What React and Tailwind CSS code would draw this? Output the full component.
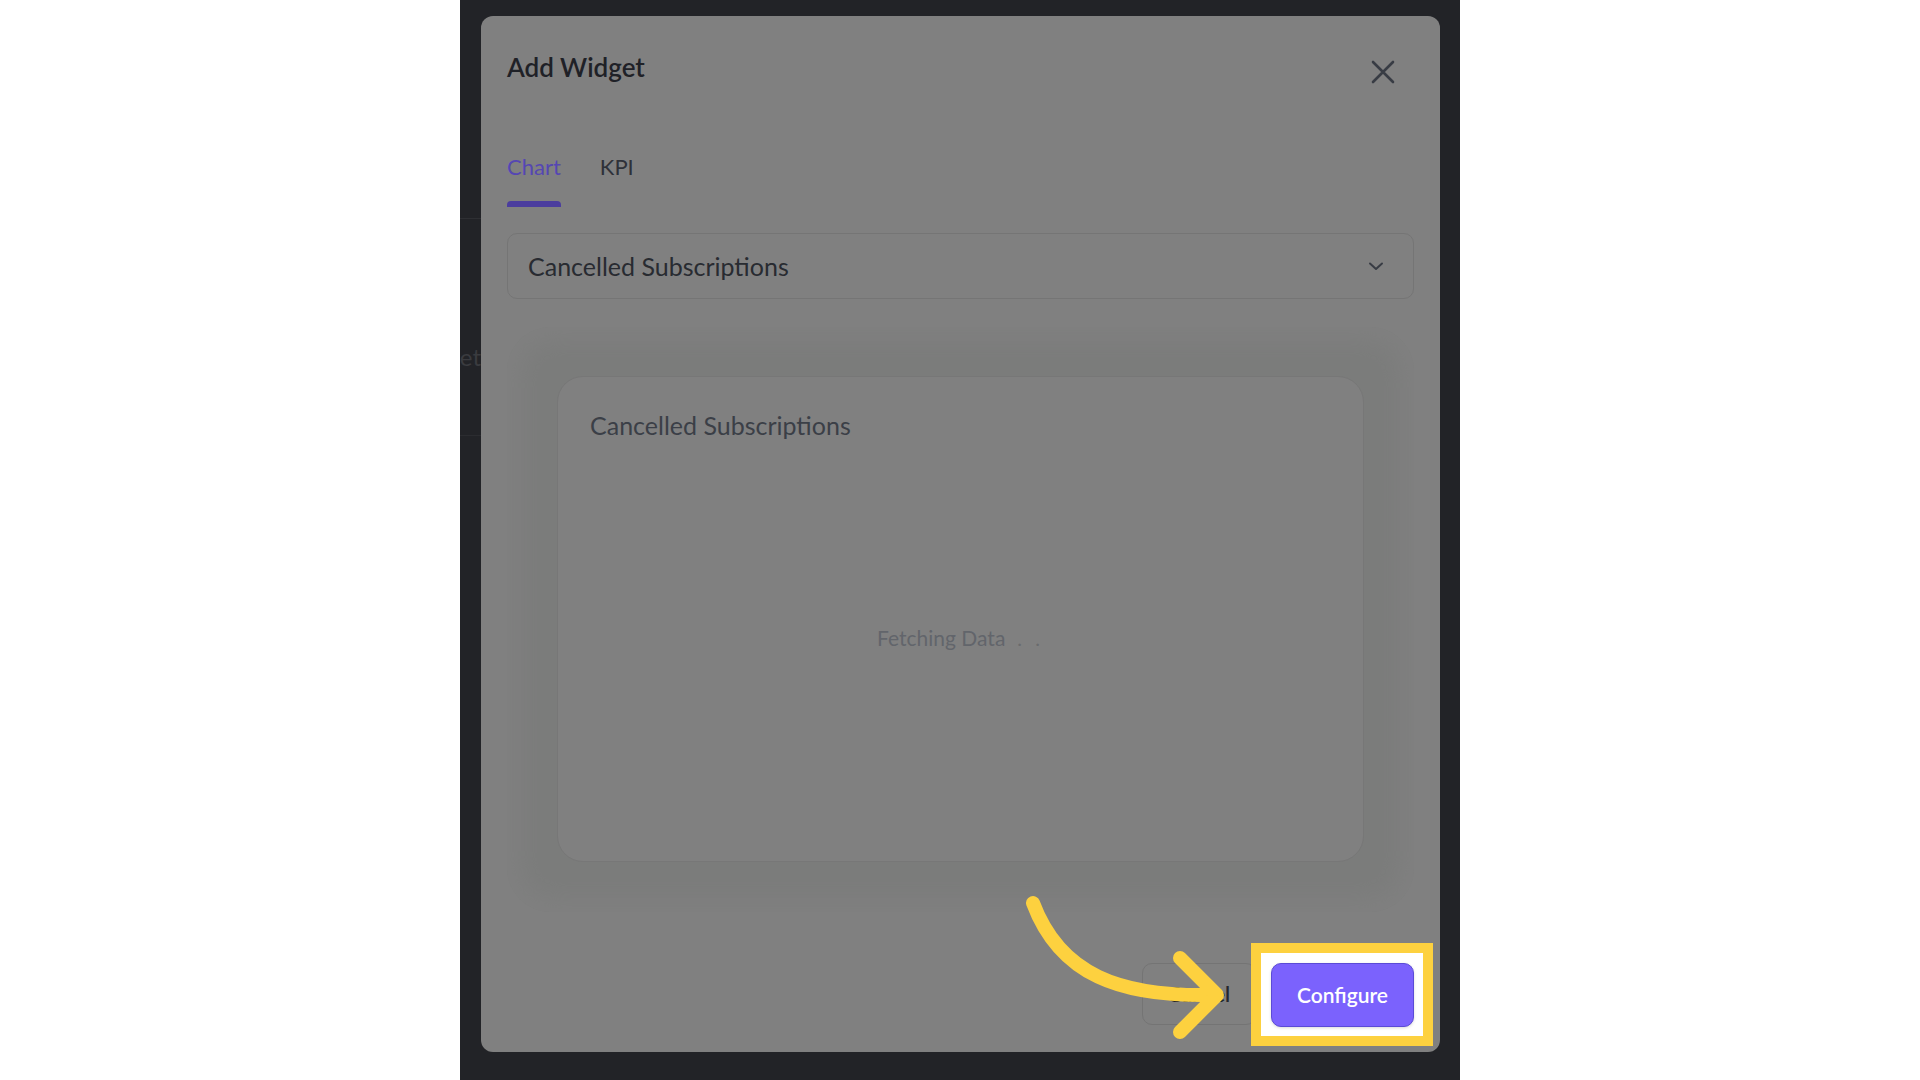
import React from 'react';

const font = { fontFamily: 'Lato, "Noto Sans", sans-serif' };

const CloseIcon = () => (
  <svg width="24" height="24" viewBox="0 0 24 24" fill="none" stroke="#383c44" strokeWidth="2.6" strokeLinecap="round">
    <path d="M2 2L22 22M22 2L2 22" />
  </svg>
);

const Chevron = () => (
  <svg width="18" height="12" viewBox="0 0 18 12" fill="none" stroke="#383c44" strokeWidth="2" strokeLinecap="round" strokeLinejoin="round">
    <path d="M3 3.5L9 9L15 3.5" />
  </svg>
);

// the yellow hand-drawn pointer that sits over the footer
const PointerArrow = () => (
  <svg
    className="absolute left-0 top-0 pointer-events-none"
    width="1920"
    height="1080"
    viewBox="0 0 1920 1080"
    fill="none"
    stroke="#fdd13f"
    strokeWidth="14"
    strokeLinecap="round"
    strokeLinejoin="round"
  >
    <path d="M1033 903C1060 975 1120 997 1213 995" />
    <path d="M1180 958L1217 995L1180 1032" />
  </svg>
);

export default function App() {
  return (
    <div className="relative flex h-[1080px] w-full bg-white" style={font}>
      <div className="w-[460px] shrink-0 bg-white" />

      <div className="flex w-[1000px] shrink-0 bg-[#222327] pt-[16px]">
        {/* sliver of the page behind the dialog */}
        <div className="flex w-[21px] shrink-0 flex-col">
          <div className="mt-[202px] h-px w-full bg-[#2e2f33]" />
          <div className="mt-[122px] flex justify-end whitespace-nowrap text-[24px] leading-[32px] text-[#3a3b3f]">
            et
          </div>
          <div className="mt-[62px] h-px w-full bg-[#2b2c30]" />
        </div>

        <div className="flex h-[1036px] w-[959px] shrink-0 flex-col rounded-[12px] bg-[#808080]">
          {/* header */}
          <div className="flex items-start justify-between pl-[26px] pr-[45px] pt-[34px]">
            <h2 className="text-[26px] font-semibold leading-[34px] text-[#1f2127]">Add Widget</h2>
            <button className="mt-[10px]">
              <CloseIcon />
            </button>
          </div>

          {/* tabs */}
          <div className="mt-[70px] flex gap-[39px] pl-[26px]">
            <div className="flex flex-col">
              <span className="text-[22px] leading-[26px] text-[#5546b3]">Chart</span>
              <span className="mt-[21px] h-[6px] w-full rounded-t-[4px] bg-[#4b3d9e]" />
            </div>
            <div className="flex flex-col">
              <span className="text-[22px] leading-[26px] text-[#2e3139]">KPI</span>
            </div>
          </div>

          {/* select */}
          <div className="mx-[26px] mt-[26px] flex h-[66px] items-center justify-between rounded-[10px] border border-[#757575] pl-[20px] pr-[28px]">
            <span className="text-[25px] leading-[30px] text-[#282b31]">Cancelled Subscriptions</span>
            <Chevron />
          </div>

          {/* preview */}
          <div className="mx-[26px] mt-[28px] h-[585px] rounded-[44px] bg-[#7b7c7b] py-[49px] shadow-[inset_0_0_26px_14px_#808080]">
            <div className="mx-auto flex h-[486px] w-[807px] flex-col rounded-[26px] border border-[#777777] bg-[#808080] pl-[32px] pt-[33px]">
              <span className="text-[25px] leading-[30px] text-[#3b3f47]">Cancelled Subscriptions</span>
              <div className="flex flex-1 items-center justify-center pb-[26px] pr-[32px]">
                <span className="text-[21px] leading-[24px] text-[#62656b]">Fetching Data</span>
                <span className="ml-[12px] text-[20px] leading-[24px] tracking-[4px] text-[#6a6b6d]">. .</span>
              </div>
            </div>
          </div>

          {/* footer */}
          <div className="mt-auto flex justify-end gap-[15px] pb-[25px] pr-[26px]">
            <button className="h-[62px] w-[114px] rounded-[10px] border border-[#747474] text-[21px] font-semibold text-[#25272d]">
              Cancel
            </button>
            <div className="relative">
              <div className="absolute -bottom-[19px] -left-[20px] -right-[19px] -top-[20px] border-[10px] border-[#fdd13f] bg-white" />
              <button className="relative h-[64px] w-[143px] rounded-[10px] border border-[#5b4bd6] bg-[#7b62fd] text-[21px] font-semibold text-white shadow-[0_1px_3px_rgba(0,0,0,0.15)]">
                Configure
              </button>
            </div>
          </div>
        </div>

        <div className="w-[20px] shrink-0" />
      </div>

      <div className="flex-1 bg-white" />

      <PointerArrow />
    </div>
  );
}
